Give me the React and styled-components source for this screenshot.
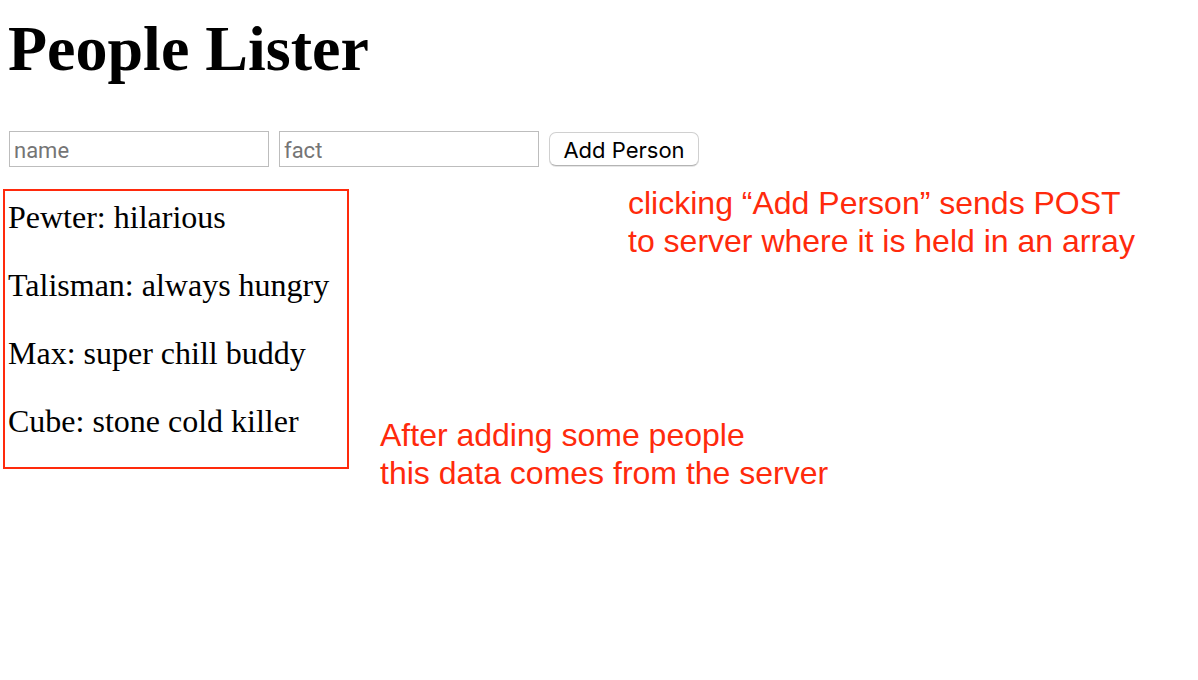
import React from "react";
import styled, { createGlobalStyle } from "styled-components";

const GlobalStyle = createGlobalStyle`
  *, *::before, *::after { box-sizing: border-box; }
  body {
    margin: 0;
    background: #fff;
    color: #000;
    font-family: "Liberation Serif", "Times New Roman", serif;
    font-size: 32px;
    line-height: 36px;
  }
`;

const Page = styled.main`
  padding: 12px 3px;
`;

const Title = styled.h1`
  margin: 0 0 45px;
  padding-left: 5px;
  font-size: 64px;
  line-height: 74px;
  font-weight: 700;
`;

const PersonForm = styled.form`
  display: flex;
  flex-wrap: wrap;
  align-items: center;
  gap: 10px;
  padding-left: 6px;
  margin-bottom: 17px;
`;

const Field = styled.input`
  width: 260px;
  height: 36px;
  padding: 4px 4px 2px;
  border: 1px solid #bdbdbd;
  border-radius: 0;
  background: #fff;
  color: #000;
  font-family: Roboto, sans-serif;
  font-size: 22px;
  &::placeholder { color: #757575; opacity: 1; }
`;

const AddButton = styled.button`
  width: 150px;
  height: 34px;
  padding: 2px 0 0;
  border: 1px solid #d0d0d0;
  border-bottom-color: #b4b4b4;
  border-radius: 7px;
  background: #fff;
  box-shadow: 0 1px 0 #e6e6e6;
  color: #000;
  font-family: Inter, sans-serif;
  font-size: 22px;
  line-height: 30px;
`;

const Results = styled.div`
  display: grid;
  grid-template-columns: 346px 217px 1fr;
  grid-template-rows: auto 1fr;
  column-gap: 31px;
`;

const People = styled.section`
  grid-row: 1 / 3;
  margin: 5px 0 23px;
  padding: 8px 3px 28px;
  border: 2px solid #ff2a0c;
`;

const Person = styled.p`
  margin: 0;
  & + & { margin-top: 32px; }
`;

const Note = styled.p`
  margin: 0;
  color: #ff2a0c;
  font-family: "Liberation Sans", Arial, sans-serif;
  line-height: 38px;
`;

const PostNote = styled(Note)`
  grid-column: 3;
`;

const DataNote = styled(Note)`
  grid-column: 2 / -1;
  align-self: end;
`;

const people = [
  { name: "Pewter", fact: "hilarious" },
  { name: "Talisman", fact: "always hungry" },
  { name: "Max", fact: "super chill buddy" },
  { name: "Cube", fact: "stone cold killer" },
];

export default function App() {
  return (
    <>
      <GlobalStyle />
      <Page>
        <Title>People Lister</Title>
        <PersonForm onSubmit={(event) => event.preventDefault()}>
          <Field type="text" name="name" placeholder="name" aria-label="name" />
          <Field type="text" name="fact" placeholder="fact" aria-label="fact" />
          <AddButton type="submit">Add Person</AddButton>
        </PersonForm>
        <Results>
          <People>
            {people.map(({ name, fact }) => (
              <Person key={name}>{name}: {fact}</Person>
            ))}
          </People>
          <PostNote>
            clicking “Add Person” sends POST<br />
            to server where it is held in an array
          </PostNote>
          <DataNote>
            After adding some people<br />
            this data comes from the server
          </DataNote>
        </Results>
      </Page>
    </>
  );
}
